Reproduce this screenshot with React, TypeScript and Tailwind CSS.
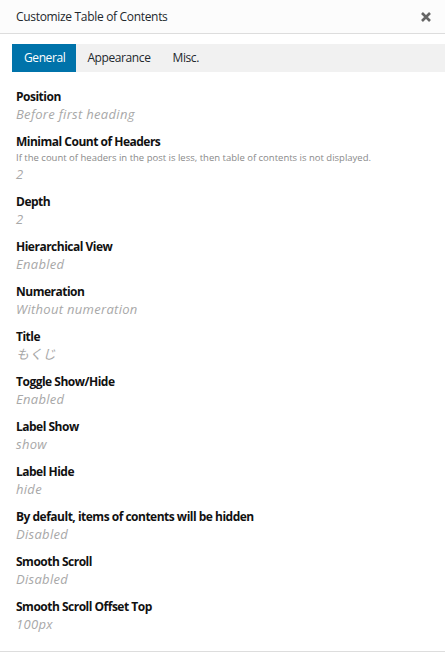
import React from "react";

type Item = { label: string; value: string; desc?: string };

const items: Item[] = [
  { label: "Position", value: "Before first heading" },
  {
    label: "Minimal Count of Headers",
    desc: "If the count of headers in the post is less, then table of contents is not displayed.",
    value: "2",
  },
  { label: "Depth", value: "2" },
  { label: "Hierarchical View", value: "Enabled" },
  { label: "Numeration", value: "Without numeration" },
  { label: "Title", value: "もくじ" },
  { label: "Toggle Show/Hide", value: "Enabled" },
  { label: "Label Show", value: "show" },
  { label: "Label Hide", value: "hide" },
  { label: "By default, items of contents will be hidden", value: "Disabled" },
  { label: "Smooth Scroll", value: "Disabled" },
  { label: "Smooth Scroll Offset Top", value: "100px" },
];

export default function App() {
  return (
    <div
      className="w-[445px] h-[653px] bg-white flex flex-col"
      style={{ fontFamily: '"Open Sans", "Noto Sans CJK JP", sans-serif' }}
    >
      <div className="h-[34px] shrink-0 bg-[#fcfcfc] border-b border-[#dddddd] flex items-center justify-between pl-4 pr-[12px]">
        <span className="text-[12px] text-[#23282d] tracking-[-0.32px]">Customize Table of Contents</span>
        <svg width="12" height="12" viewBox="0 0 12 12" className="mr-[1px]">
          <path d="M2 2 L10 10 M10 2 L2 10" stroke="#666" strokeWidth="2.6" strokeLinecap="butt" />
        </svg>
      </div>
      <div className="mt-[10px] ml-[12px] h-[28px] bg-[#f1f1f1] flex items-stretch text-[12px] tracking-[-0.4px]">
        <div className="bg-[#0073aa] text-white pl-[12px] pr-[11px] flex items-center">General</div>
        <div className="text-[#23282d] px-[11px] flex items-center">Appearance</div>
        <div className="text-[#23282d] px-[11px] flex items-center">Misc.</div>
      </div>
      <div className="flex-1 flex flex-col pt-[16px] pl-4 border-b border-[#dddddd] mb-[1px]">
        {items.map((it) => (
          <div key={it.label} className="mb-[10px]">
            <div className="text-[12px] font-bold leading-[17px] text-[#111] tracking-[-0.5px]">{it.label}</div>
            {it.desc && (
              <div className="text-[9.5px] leading-[15px] text-[#8a8a8a]">{it.desc}</div>
            )}
            <div className="text-[13px] italic leading-[18px] text-[#a8a8a8] tracking-[0.3px]">{it.value}</div>
          </div>
        ))}
      </div>
    </div>
  );
}
